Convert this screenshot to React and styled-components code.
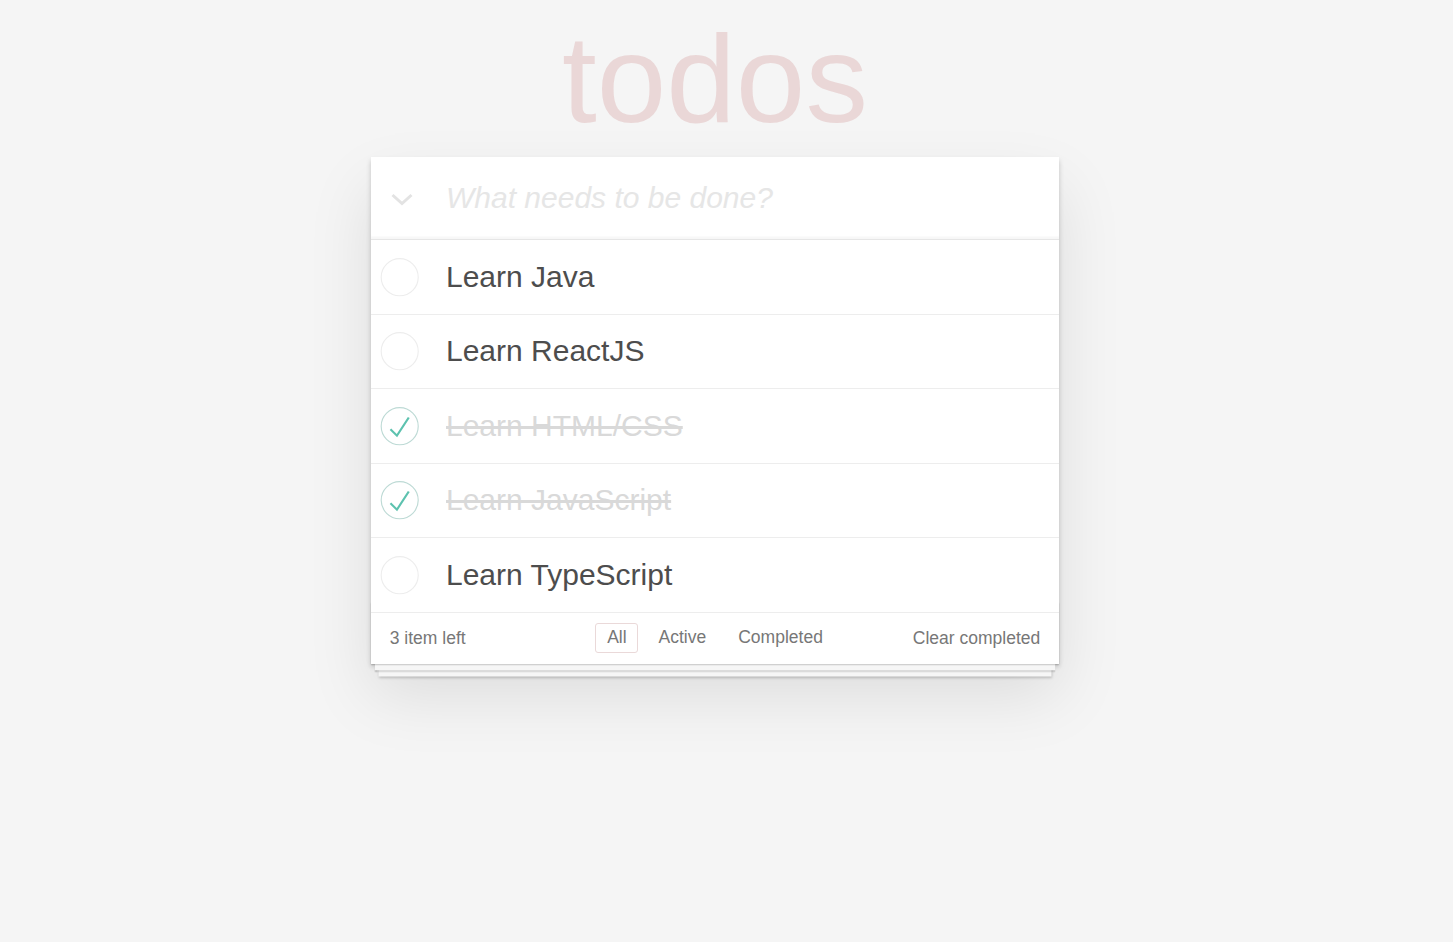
import React, { useState } from "react";
import styled, { createGlobalStyle } from "styled-components";

const GlobalStyle = createGlobalStyle`
  html, body {
    margin: 0;
    padding: 0;
  }
  body {
    background: #f5f5f5;
    color: #4d4d4d;
    font-family: "Liberation Sans", Arial, sans-serif;
    font-size: 17.5px;
    line-height: 1.4em;
    -webkit-font-smoothing: antialiased;
  }
`;

const Page = styled.div`
  display: flex;
  flex-direction: column;
  align-items: center;
  min-height: 100vh;
  box-sizing: border-box;
  padding: 16px 23px 50px 0;
`;

const Title = styled.h1`
  margin: 0 0 16px;
  font-size: 125px;
  line-height: 125px;
  font-weight: 400;
  color: rgba(175, 47, 47, 0.15);
  text-align: center;
  text-rendering: optimizeLegibility;
`;

const Card = styled.section`
  width: 688px;
  background: #fff;
  box-shadow: 0 2.5px 5px 0 rgba(0, 0, 0, 0.2), 0 31px 62px 0 rgba(0, 0, 0, 0.1);
`;

const Header = styled.header`
  display: flex;
  align-items: center;
  height: 82px;
  box-sizing: border-box;
  box-shadow: inset 0 -2.5px 1px rgba(0, 0, 0, 0.03);
`;

const ToggleAll = styled.button`
  width: 75px;
  height: 82px;
  flex: none;
  display: flex;
  align-items: center;
  justify-content: flex-start;
  padding: 3px 0 0 19px;
  box-sizing: border-box;
  background: none;
  border: none;
  cursor: pointer;
`;

const NewTodo = styled.input`
  flex: 1;
  border: none;
  outline: none;
  background: transparent;
  font-family: inherit;
  font-size: 30px;
  line-height: 1.4em;
  padding: 0 20px 0 0;
  color: #4d4d4d;

  &::placeholder {
    font-style: italic;
    font-weight: 300;
    color: #e6e6e6;
  }
`;

const List = styled.ul`
  margin: 0;
  padding: 0;
  list-style: none;
  border-top: 1px solid #e6e6e6;
`;

const Item = styled.li`
  display: flex;
  align-items: center;
  border-bottom: 1px solid #ededed;
  min-height: 73.5px;
`;

const Toggle = styled.button`
  width: 50px;
  height: 50px;
  flex: none;
  padding: 0;
  margin-right: 25px;
  border: none;
  background: none;
  cursor: pointer;
  display: block;

  svg {
    display: block;
  }
`;

const Label = styled.label`
  flex: 1;
  font-size: 30px;
  line-height: 1.2;
  padding: 18.75px 18.75px 18.75px 0;
  word-break: break-all;
  color: ${(p) => (p.done ? "#d9d9d9" : "#4d4d4d")};
  text-decoration: ${(p) => (p.done ? "line-through" : "none")};
  transition: color 0.4s;
`;

const Footer = styled.footer`
  position: relative;
  display: grid;
  grid-template-columns: 1fr auto 1fr;
  align-items: center;
  height: 51px;
  padding: 0 18.75px;
  box-sizing: border-box;
  color: #777;
  font-size: 17.5px;

  &::before {
    content: "";
    position: absolute;
    right: 0;
    bottom: 0;
    left: 0;
    height: 62px;
    overflow: hidden;
    pointer-events: none;
    box-shadow: 0 1.25px 1.25px rgba(0, 0, 0, 0.2),
      0 10px 0 -3.75px #f6f6f6,
      0 11.25px 1.25px -3.75px rgba(0, 0, 0, 0.2),
      0 20px 0 -7.5px #f6f6f6,
      0 21.25px 2.5px -7.5px rgba(0, 0, 0, 0.2);
  }
`;

const Count = styled.span`
  justify-self: start;
`;

const Filters = styled.ul`
  display: flex;
  margin: 0;
  padding: 0;
  list-style: none;
`;

const FilterLink = styled.a`
  display: block;
  margin: 3.75px 4.25px;
  padding: 3.25px 10.75px 3.75px;
  line-height: 21px;
  border: 1px solid ${(p) => (p.selected ? "#ead9d9" : "transparent")};
  border-radius: 3px;
  color: inherit;
  text-decoration: none;
  cursor: pointer;

  &:hover {
    border-color: #f3e8e8;
  }
`;

const ClearButton = styled.button`
  justify-self: end;
  border: none;
  background: none;
  padding: 0;
  font-family: inherit;
  font-size: 17.5px;
  line-height: 1.4em;
  color: #777;
  cursor: pointer;
`;

const Chevron = () => (
  <svg width="24" height="15" viewBox="0 0 24 15">
    <polyline
      points="2.5,3 12,11.5 21.5,3"
      fill="none"
      stroke="#e3e3e3"
      strokeWidth="3"
    />
  </svg>
);

const CheckCircle = ({ done }) => (
  <svg width="50" height="50" viewBox="-10 -18 100 135">
    <circle
      cx="50"
      cy="50"
      r="50"
      fill="none"
      stroke={done ? "#bddad5" : "#ededed"}
      strokeWidth="3"
    />
    {done && <path fill="#5dc2af" d="M72 25L42 71 27 56l-4 4 20 20 34-52z" />}
  </svg>
);

const initialTodos = [
  { id: 1, title: "Learn Java", done: false },
  { id: 2, title: "Learn ReactJS", done: false },
  { id: 3, title: "Learn HTML/CSS", done: true },
  { id: 4, title: "Learn JavaScript", done: true },
  { id: 5, title: "Learn TypeScript", done: false },
];

const App = () => {
  const [todos, setTodos] = useState(initialTodos);
  const [filter, setFilter] = useState("all");

  const toggle = (id) =>
    setTodos(todos.map((t) => (t.id === id ? { ...t, done: !t.done } : t)));

  const left = todos.filter((t) => !t.done).length;
  const shown = todos.filter((t) =>
    filter === "active" ? !t.done : filter === "completed" ? t.done : true
  );

  return (
    <>
      <GlobalStyle />
      <Page>
        <Title>todos</Title>
        <Card>
          <Header>
            <ToggleAll aria-label="Toggle all">
              <Chevron />
            </ToggleAll>
            <NewTodo placeholder="What needs to be done?" />
          </Header>
          <List>
            {shown.map((t) => (
              <Item key={t.id}>
                <Toggle onClick={() => toggle(t.id)}>
                  <CheckCircle done={t.done} />
                </Toggle>
                <Label done={t.done}>{t.title}</Label>
              </Item>
            ))}
          </List>
          <Footer>
            <Count>{left} item left</Count>
            <Filters>
              <li>
                <FilterLink selected={filter === "all"} onClick={() => setFilter("all")}>
                  All
                </FilterLink>
              </li>
              <li>
                <FilterLink selected={filter === "active"} onClick={() => setFilter("active")}>
                  Active
                </FilterLink>
              </li>
              <li>
                <FilterLink
                  selected={filter === "completed"}
                  onClick={() => setFilter("completed")}
                >
                  Completed
                </FilterLink>
              </li>
            </Filters>
            <ClearButton onClick={() => setTodos(todos.filter((t) => !t.done))}>
              Clear completed
            </ClearButton>
          </Footer>
        </Card>
      </Page>
    </>
  );
};

export default App;
